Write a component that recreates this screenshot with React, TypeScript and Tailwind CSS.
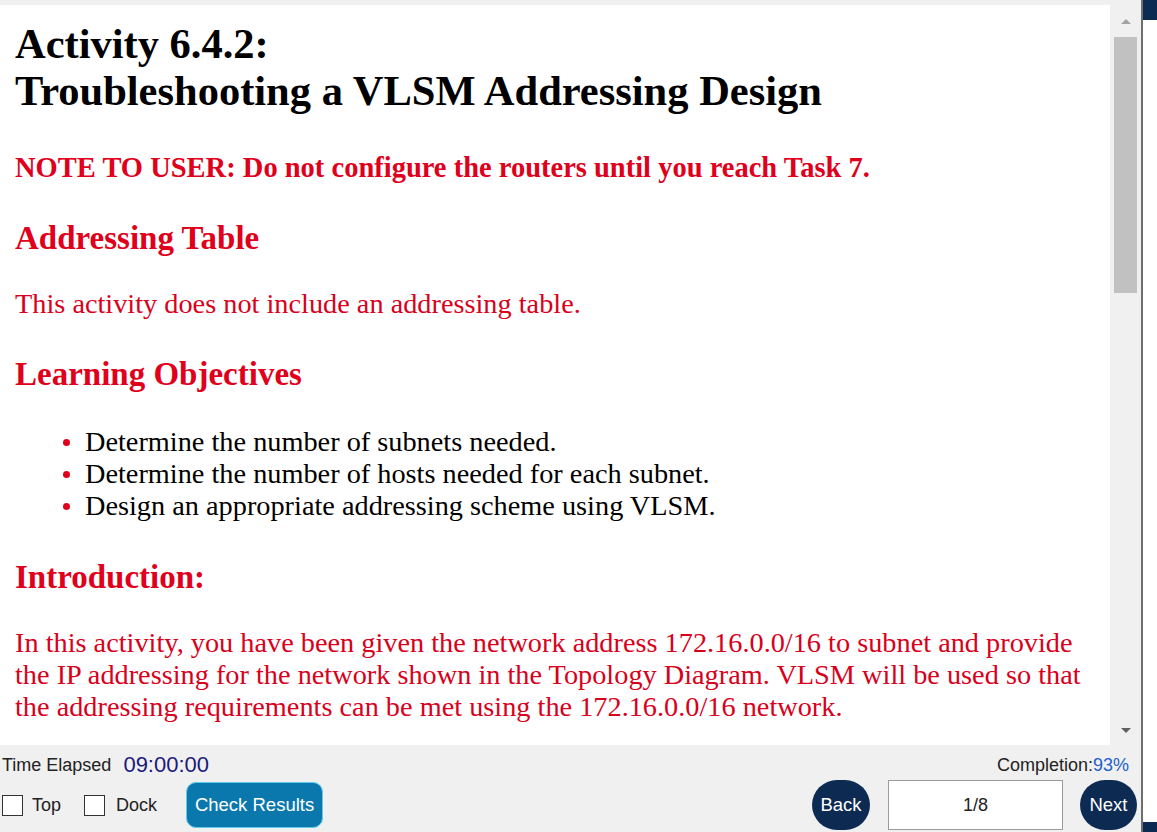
import React from 'react';

const serif = { fontFamily: '"Liberation Serif", "Times New Roman", serif' };

const objectives = [
  'Determine the number of subnets needed.',
  'Determine the number of hosts needed for each subnet.',
  'Design an appropriate addressing scheme using VLSM.',
];

const introLines = [
  'In this activity, you have been given the network address 172.16.0.0/16 to subnet and provide',
  'the IP addressing for the network shown in the Topology Diagram. VLSM will be used so that',
  'the addressing requirements can be met using the 172.16.0.0/16 network.',
];

const Checkbox: React.FC<{ label: string; gap: string }> = ({ label, gap }) => (
  <label className={`flex items-center ${gap}`}>
    <span className="w-[21px] h-[21px] border border-[#333] bg-white" />
    <span className="text-[18px] text-[#222]">{label}</span>
  </label>
);

export default function App() {
  return (
    <div
      className="w-[1157px] h-[832px] flex bg-white overflow-hidden"
      style={{ fontFamily: '"Liberation Sans", Arial, sans-serif' }}
    >
      <div className="w-[1141px] flex flex-col">
        <div className="h-[5px] bg-[#f0f0f0]" />

        {/* content + scrollbar */}
        <div className="flex flex-1 min-h-0">
          <div className="flex-1 overflow-hidden pl-[15px] pt-[15px] whitespace-nowrap" style={serif}>
            <h1 className="text-[42.5px] leading-[47px] font-bold text-black">
              Activity 6.4.2:
              <br />
              Troubleshooting a VLSM Addressing Design
            </h1>
            <p className="mt-[40px] text-[28.5px] leading-[28px] font-bold text-[#e0001b]">
              NOTE TO USER: Do not configure the routers until you reach Task 7.
            </p>
            <h2 className="mt-[40px] text-[33px] leading-[32px] font-bold text-[#e0001b]">
              Addressing Table
            </h2>
            <p className="mt-[36px] text-[28.3px] leading-[28px] text-[#d9001b]">
              This activity does not include an addressing table.
            </p>
            <h2 className="mt-[39px] text-[33px] leading-[34px] font-bold text-[#e0001b]">
              Learning Objectives
            </h2>
            <ul className="mt-[35px] pl-[70px]">
              {objectives.map((item) => (
                <li key={item} className="flex items-center text-[28.3px] leading-[32px] text-black">
                  <span className="w-[7px] h-[7px] rounded-full bg-[#e0001b] -ml-[22px] mr-[15px]" />
                  {item}
                </li>
              ))}
            </ul>
            <h2 className="mt-[38px] text-[33px] leading-[34px] font-bold text-[#e0001b]">
              Introduction:
            </h2>
            <p className="mt-[33px] text-[28.3px] leading-[32px] text-[#d9001b]">
              {introLines.map((line) => (
                <React.Fragment key={line}>
                  {line}
                  <br />
                </React.Fragment>
              ))}
            </p>
          </div>

          {/* scrollbar */}
          <div className="w-[31px] bg-[#f0f0f0] flex flex-col items-center">
            <div className="h-[32px] flex items-center justify-center">
              <span className="w-0 h-0 border-x-[5px] border-x-transparent border-b-[5px] border-b-[#a3a3a3]" />
            </div>
            <div className="w-[23px] h-[256px] bg-[#c1c1c1]" />
            <div className="flex-1" />
            <div className="h-[30px] flex items-center justify-center">
              <span className="w-0 h-0 border-x-[5px] border-x-transparent border-t-[5px] border-t-[#606060]" />
            </div>
          </div>
        </div>

        {/* bottom bar */}
        <div className="h-[87px] bg-[#f0f0f0] flex flex-col px-[2px]">
          <div className="h-[35px] flex items-end justify-between pb-[2px]">
            <div className="flex items-end">
              <span className="text-[18px] leading-[22px] text-[#222] mb-[2px]">Time Elapsed</span>
              <span className="ml-[12px] text-[22px] leading-[26px] text-[#1a1a7a]">09:00:00</span>
            </div>
            <div className="text-[18px] leading-[22px] text-[#222] mr-[10px] mb-[2px]">
              Completion:<span className="text-[#2360c8]">93%</span>
            </div>
          </div>
          <div className="flex items-center h-[50px]">
            <Checkbox label="Top" gap="gap-[9px]" />
            <div className="ml-[23px]">
              <Checkbox label="Dock" gap="gap-[11px]" />
            </div>
            <button className="ml-[29px] w-[137px] h-[46px] rounded-[10px] bg-[#0a78ad] text-white text-[18.5px] border border-[#5fcbe9]">
              Check Results
            </button>
            <div className="flex-1" />
            <button className="w-[58px] h-[50px] rounded-[25px] bg-[#0d2a52] text-white text-[18.5px]">
              Back
            </button>
            <div className="ml-[18px] w-[175px] h-[50px] border border-[#9a9a9a] bg-white flex items-center justify-center text-[18px] text-[#222]">
              1/8
            </div>
            <button className="ml-[17px] w-[57px] h-[50px] rounded-[25px] bg-[#0d2a52] text-white text-[18.5px]">
              Next
            </button>
            <div className="w-[2px]" />
          </div>
        </div>
      </div>

      <div className="w-[2px] bg-[#6e6e6e]" />

      <div className="flex-1 flex flex-col">
        <div className="h-[20px] bg-[#0d2a52]" />
        <div className="flex-1 bg-white" />
        <div className="h-[10px] bg-[#0d2a52]" />
      </div>
    </div>
  );
}
